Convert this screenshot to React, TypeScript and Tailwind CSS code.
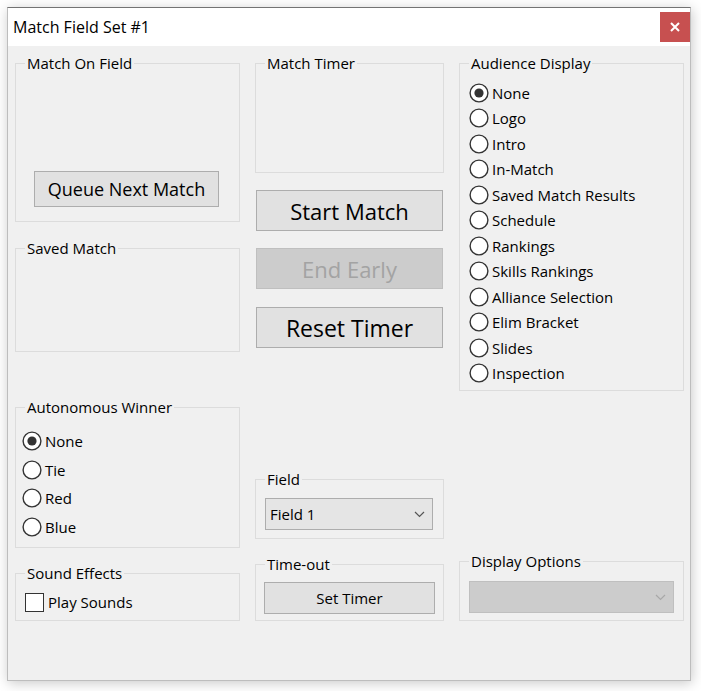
import React from 'react';

const GroupBox = ({ title, className = '', children }: { title: string; className?: string; children?: React.ReactNode }) => (
  <div className={`relative border border-[#dcdcdc] ${className}`}>
    <span className="absolute left-[9px] top-[-11px] bg-[#f0f0f0] px-[2px] text-[15px] leading-[21px] text-black whitespace-nowrap">
      {title}
    </span>
    {children}
  </div>
);

const Radio = ({ label, checked = false, rowClass }: { label: string; checked?: boolean; rowClass: string }) => (
  <div className={`flex items-center ${rowClass}`}>
    <svg width="20" height="20" viewBox="0 0 20 20" className="shrink-0">
      <circle cx="10" cy="10" r="8.9" fill="#ffffff" stroke="#333333" strokeWidth="1.4" />
      {checked && <circle cx="10" cy="10" r="4.6" fill="#333333" />}
    </svg>
    <span className="ml-[3px] text-[15px] leading-[20px] text-black whitespace-nowrap">{label}</span>
  </div>
);

const Chevron = ({ color }: { color: string }) => (
  <svg width="11" height="7" viewBox="0 0 11 7">
    <path d="M1 1 L5.5 5.5 L10 1" fill="none" stroke={color} strokeWidth="1.2" />
  </svg>
);

const audienceOptions = [
  'None',
  'Logo',
  'Intro',
  'In-Match',
  'Saved Match Results',
  'Schedule',
  'Rankings',
  'Skills Rankings',
  'Alliance Selection',
  'Elim Bracket',
  'Slides',
  'Inspection',
];

const autoOptions = ['None', 'Tie', 'Red', 'Blue'];

export default function App() {
  return (
    <div className="min-h-[691px] bg-white pl-[7px] pt-[7px] font-['Open_Sans',sans-serif]">
      <div className="flex h-[674px] w-[684px] flex-col border border-[#bdbdbd] border-t-[#737373] bg-[#f0f0f0] shadow-[1px_2px_12px_rgba(0,0,0,0.22)]">
        {/* title bar */}
        <div className="flex h-[38px] shrink-0 items-start justify-between bg-white">
          <span className="pl-[5px] text-[16px] leading-[38px] text-black">Match Field Set #1</span>
          <div className="mt-[4px] flex h-[30px] w-[30px] items-center justify-center bg-[#c75050]">
            <svg width="10" height="10" viewBox="0 0 10 10">
              <path d="M1 1 L9 9 M9 1 L1 9" stroke="#ffffff" strokeWidth="2" />
            </svg>
          </div>
        </div>

        <div className="flex gap-[15px] pl-[7px] pt-[17px]">
          {/* left column */}
          <div className="flex w-[225px] flex-col">
            <GroupBox title="Match On Field" className="h-[159px] pl-[18px] pt-[107px]">
              <button className="h-[36px] w-[185px] border border-[#adadad] bg-[#e1e1e1] text-[18px] leading-[22px] text-black">
                Queue Next Match
              </button>
            </GroupBox>
            <GroupBox title="Saved Match" className="mt-[26px] h-[104px]" />
            <GroupBox title="Autonomous Winner" className="mt-[55px] h-[141px] pl-[6px] pt-[19px]">
              {autoOptions.map((o, i) => (
                <Radio key={o} label={o} checked={i === 0} rowClass="h-[28.5px]" />
              ))}
            </GroupBox>
            <GroupBox title="Sound Effects" className="mt-[25px] h-[48px] pl-[9px] pt-[19px]">
              <div className="flex items-center">
                <div className="h-[19px] w-[19px] border-[1.5px] border-[#333333] bg-white" />
                <span className="ml-[4px] text-[15px] leading-[19px] text-black">Play Sounds</span>
              </div>
            </GroupBox>
          </div>

          {/* middle column */}
          <div className="flex w-[189px] flex-col">
            <GroupBox title="Match Timer" className="h-[110px]" />
            <button className="ml-[1px] mt-[17px] h-[41px] w-[187px] border border-[#adadad] bg-[#e1e1e1] text-[22px] leading-[28px] text-black">
              Start Match
            </button>
            <button
              disabled
              className="ml-[1px] mt-[17px] h-[41px] w-[187px] border border-[#bfbfbf] bg-[#cccccc] text-[22px] leading-[28px] text-[#a3a3a3]"
            >
              End Early
            </button>
            <button className="ml-[1px] mt-[18px] h-[41px] w-[187px] border border-[#adadad] bg-[#e1e1e1] text-[23px] leading-[28px] text-black">
              Reset Timer
            </button>
            <GroupBox title="Field" className="mt-[131px] h-[60px] pl-[9px] pt-[18px]">
              <div className="flex h-[32px] w-[168px] items-center justify-between border border-[#adadad] bg-[#e5e5e5] pl-[4px] pr-[7px]">
                <span className="text-[15px] leading-[20px] text-black">Field 1</span>
                <Chevron color="#555555" />
              </div>
            </GroupBox>
            <GroupBox title="Time-out" className="mt-[25px] h-[57px] pl-[8px] pt-[17px]">
              <button className="h-[32px] w-[171px] border border-[#adadad] bg-[#e1e1e1] text-[15px] leading-[20px] text-black">
                Set Timer
              </button>
            </GroupBox>
          </div>

          {/* right column */}
          <div className="flex w-[225px] flex-col">
            <GroupBox title="Audience Display" className="h-[328px] pl-[9px] pt-[16px]">
              {audienceOptions.map((o, i) => (
                <Radio key={o} label={o} checked={i === 0} rowClass="h-[25.5px]" />
              ))}
            </GroupBox>
            <GroupBox title="Display Options" className="mt-[170px] h-[60px] pl-[9px] pt-[19px]">
              <div className="flex h-[32px] w-[205px] items-center justify-end border border-[#bfbfbf] bg-[#cccccc] pr-[7px]">
                <Chevron color="#a8a8a8" />
              </div>
            </GroupBox>
          </div>
        </div>
      </div>
    </div>
  );
}
